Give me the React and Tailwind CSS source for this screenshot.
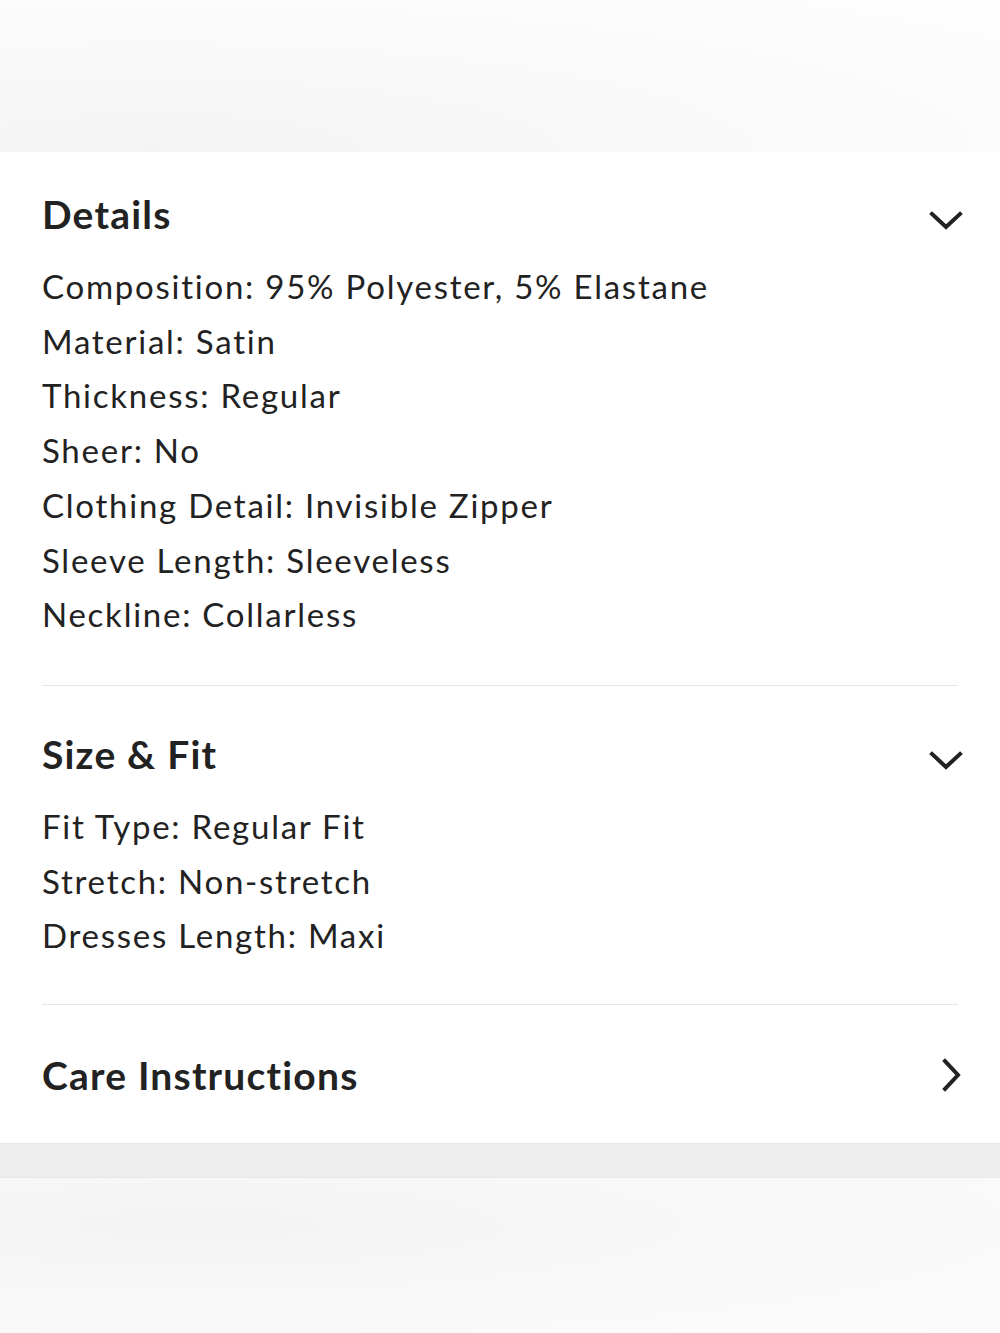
import React from 'react';

const details = [
  'Composition: 95% Polyester, 5% Elastane',
  'Material: Satin',
  'Thickness: Regular',
  'Sheer: No',
  'Clothing Detail: Invisible Zipper',
  'Sleeve Length: Sleeveless',
  'Neckline: Collarless',
];

const sizeFit = ['Fit Type: Regular Fit', 'Stretch: Non-stretch', 'Dresses Length: Maxi'];

const ChevronDown = () => (
  <svg width="36" height="24" viewBox="0 0 36 24" fill="none" stroke="#222" strokeWidth="4" strokeLinecap="square">
    <path d="M4 5 L18 18 L32 5" />
  </svg>
);

const ChevronRight = () => (
  <svg width="24" height="36" viewBox="0 0 24 36" fill="none" stroke="#222" strokeWidth="4" strokeLinecap="square">
    <path d="M5 4 L18 18 L5 32" />
  </svg>
);

const Section = ({ title, items, open, className }) => (
  <div className={className}>
    <div className="flex h-[60px] items-center justify-between">
      <h2 className="text-[39px] font-bold tracking-[1.2px] text-[#222]">{title}</h2>
      <div className={open ? '-mr-[6px] mt-[14px] flex' : '-mr-[6px] flex'}>
        {open ? <ChevronDown /> : <ChevronRight />}
      </div>
    </div>
    {items && (
      <ul className="mt-[15px]">
        {items.map((t) => (
          <li key={t} className="text-[33px] leading-[54.7px] tracking-[1.75px] text-[#222]">
            {t}
          </li>
        ))}
      </ul>
    )}
  </div>
);

export default function App() {
  return (
    <div className="h-[1333px] w-[1000px] bg-white font-['Lato',sans-serif]">
      {/* product image edge */}
      <div className="h-[152px] bg-[radial-gradient(ellipse_at_15%_100%,#f4f4f4,#fafafa_55%,#fefefe)]" />

      <div className="px-[42px]">
        <Section title="Details" items={details} open className="pt-[32px] pb-[43px]" />
        <div className="h-px bg-[#e6e6e6]" />
        <Section title="Size & Fit" items={sizeFit} open className="pt-[38px] pb-[41px]" />
        <div className="h-px bg-[#e6e6e6]" />
        <Section title="Care Instructions" className="pt-[40px] pb-[38px]" />
      </div>

      <div className="h-[35px] border-y border-[#e8e8e8] bg-[#eeeeee]" />
      <div className="h-[156px] bg-[radial-gradient(ellipse_at_20%_30%,#f3f3f3,#f8f8f8_45%,#fbfbfb)]" />
    </div>
  );
}
